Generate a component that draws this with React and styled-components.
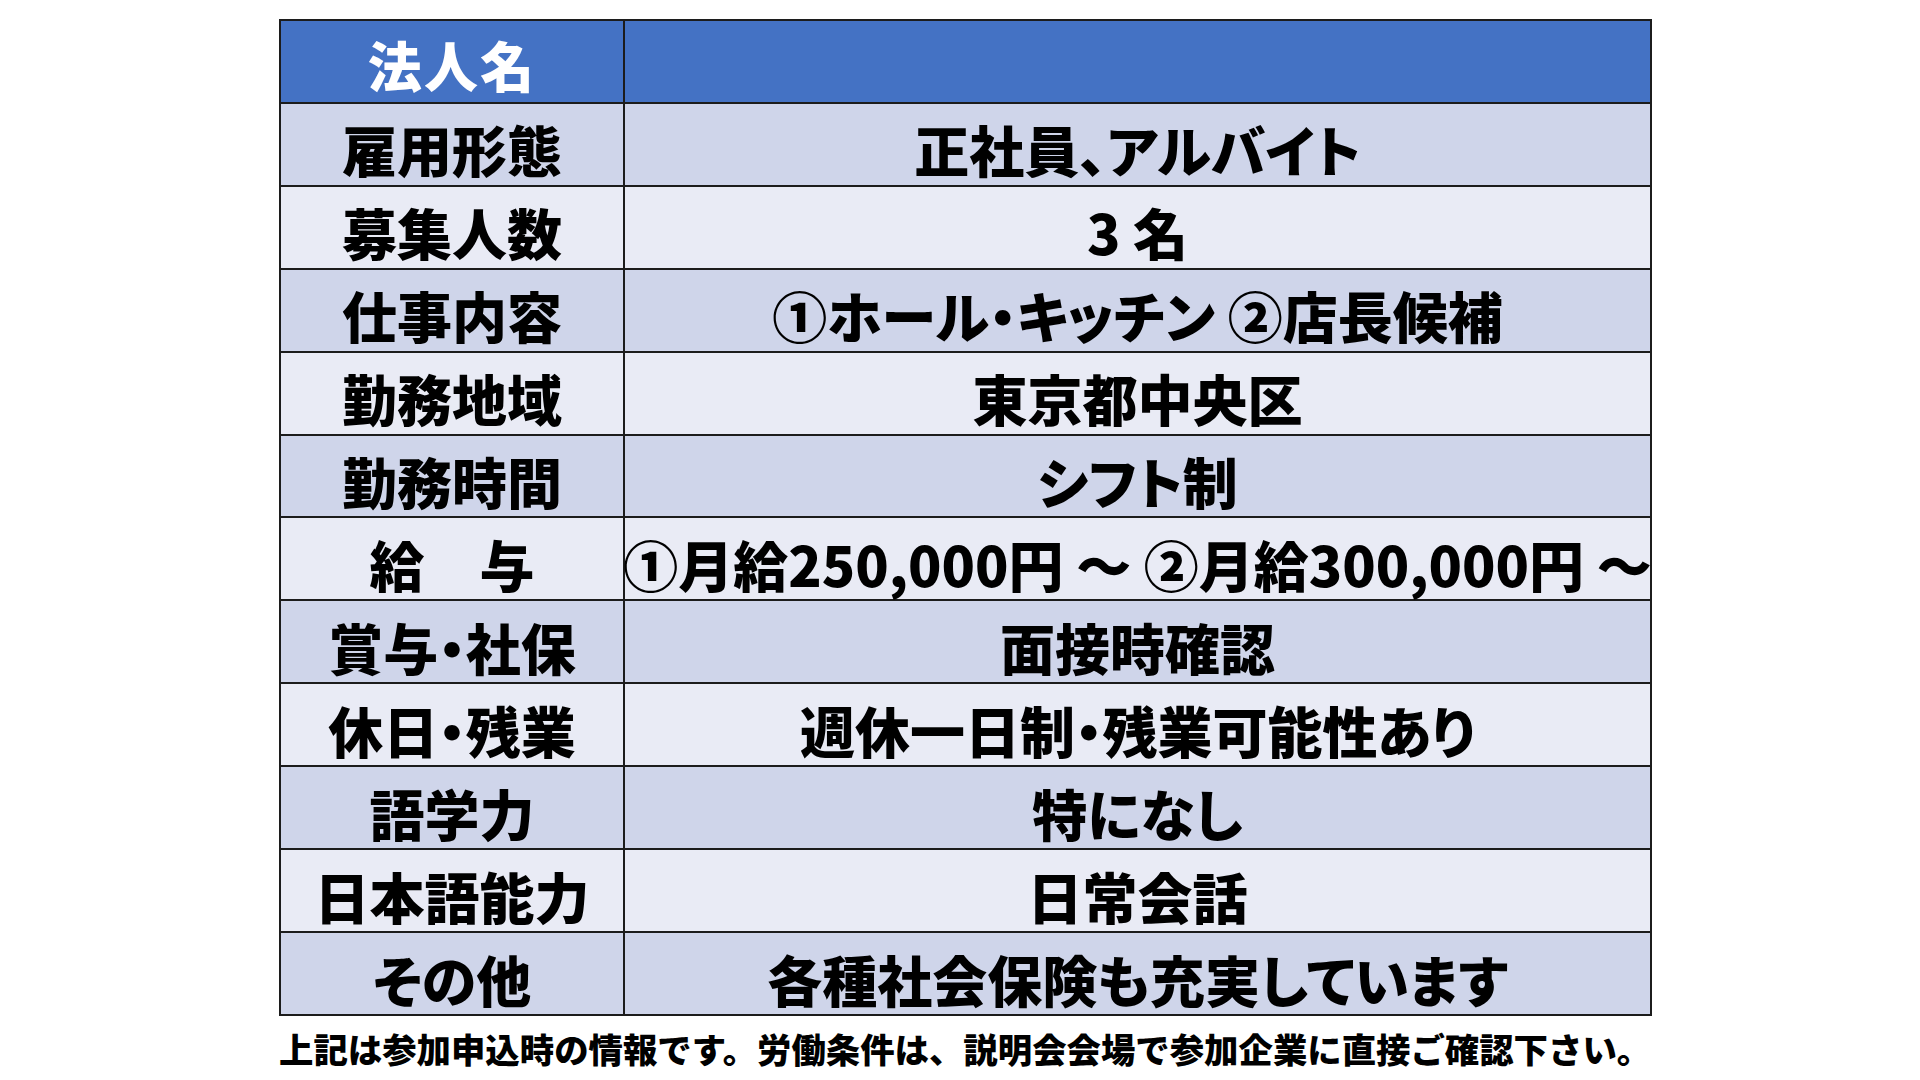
import React from "react";
import styled, { createGlobalStyle } from "styled-components";

const GlobalStyle = createGlobalStyle`
  html, body {
    margin: 0;
    padding: 0;
    background: #ffffff;
  }
  body {
    font-family: "Noto Sans CJK JP", "Noto Sans", sans-serif;
    color: #000000;
  }
`;

const Page = styled.div`
  width: 1920px;
  height: 1080px;
  box-sizing: border-box;
  padding: 19px 0 0 279px;
  display: flex;
  flex-direction: column;
  align-items: flex-start;
`;

const Table = styled.div`
  width: 1373px;
  height: 997px;
  box-sizing: border-box;
  display: grid;
  grid-template-columns: 342px minmax(0, 1fr);
  grid-template-rows: repeat(12, minmax(0, 1fr));
  gap: 2px;
  padding: 2px;
  background: #1c1c1c;
`;

const Cell = styled.div`
  display: flex;
  align-items: center;
  justify-content: center;
  min-width: 0;
  padding-top: 8px;
  box-sizing: border-box;
  white-space: nowrap;
  font-family: "Noto Sans CJK JP", sans-serif;
  font-weight: 900;
  font-size: ${(p) => (p.$head ? "54px" : "55px")};
  font-feature-settings: "palt" 1;
  line-height: 1.2;
  color: ${(p) => (p.$head ? "#ffffff" : "#000000")};
  background: ${(p) =>
    p.$head ? "#4472c4" : p.$band ? "#cfd5ea" : "#e9ebf5"};
  letter-spacing: ${(p) => (p.$head ? "0.04em" : "0")};
`;

const Note = styled.p`
  margin: 12px 0 0 0;
  font-family: "Noto Sans CJK JP", sans-serif;
  font-weight: 900;
  font-size: 34.4px;
  line-height: 1.2;
  white-space: nowrap;
  color: #000000;
`;

const rows = [
  ["雇用形態", "正社員、アルバイト"],
  ["募集人数", "3 名"],
  ["仕事内容", "①ホール・キッチン ②店長候補"],
  ["勤務地域", "東京都中央区"],
  ["勤務時間", "シフト制"],
  ["給　与", "①月給250,000円 ～ ②月給300,000円 ～"],
  ["賞与・社保", "面接時確認"],
  ["休日・残業", "週休一日制・残業可能性あり"],
  ["語学力", "特になし"],
  ["日本語能力", "日常会話"],
  ["その他", "各種社会保険も充実しています"],
];

export default function App() {
  return (
    <>
      <GlobalStyle />
      <Page>
        <Table>
          <Cell $head>法人名</Cell>
          <Cell $head />
          {rows.map(([label, value], i) => (
            <React.Fragment key={label}>
              <Cell $band={i % 2 === 0}>{label}</Cell>
              <Cell $band={i % 2 === 0}>{value}</Cell>
            </React.Fragment>
          ))}
        </Table>
        <Note>
          上記は参加申込時の情報です。労働条件は、説明会会場で参加企業に直接ご確認下さい。
        </Note>
      </Page>
    </>
  );
}
